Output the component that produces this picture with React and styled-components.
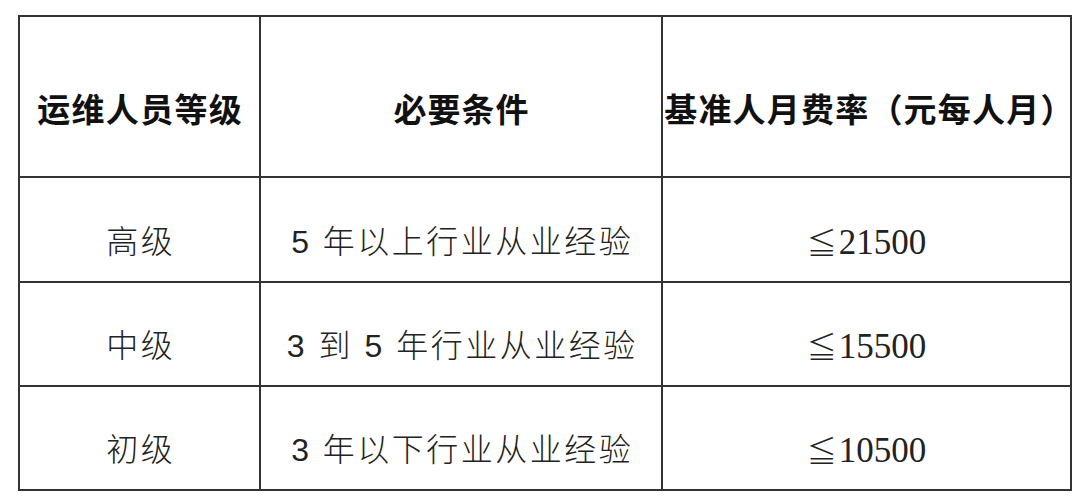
import React from "react";
import styled, { createGlobalStyle } from "styled-components";

const Global = createGlobalStyle`
  html, body { margin: 0; padding: 0; background: #ffffff; }
  body { font-family: "Noto Sans CJK SC", sans-serif; }
`;

const Page = styled.div`
  padding: 15px 0 0 18px;
  width: 1080px;
  height: 500px;
  box-sizing: border-box;
  background: #fff;
`;

const Table = styled.table`
  border-collapse: collapse;
  table-layout: fixed;
  width: 1052px;
`;

const Row = styled.tr`
  height: ${(p) => p.$h}px;
`;

const HeadCell = styled.th`
  border: 2px solid #333;
  padding: 22px 0 0 ${(p) => p.$ls ?? 1}px;
  text-align: center;
  vertical-align: middle;
  font-family: "Noto Sans CJK SC", sans-serif;
  font-weight: 700;
  font-size: 33px;
  line-height: 40px;
  letter-spacing: ${(p) => p.$ls ?? 1}px;
  white-space: nowrap;
  color: #111;
`;

const Cell = styled.td`
  border: 2px solid #333;
  padding: 24px 0 0 ${(p) => p.$ls ?? 2.5}px;
  text-align: center;
  vertical-align: middle;
  font-family: ${(p) =>
    p.$serif
      ? `"Liberation Serif", "Noto Sans CJK SC", serif`
      : `"Liberation Sans", "Noto Sans CJK SC", sans-serif`};
  font-weight: 300;
  font-size: ${(p) => (p.$serif ? 35 : 32)}px;
  line-height: 40px;
  letter-spacing: ${(p) => p.$ls ?? 2.5}px;
  white-space: nowrap;
  color: #222;
`;

const Leq = styled.span`
  font-family: "Noto Sans CJK SC", sans-serif;
  font-size: 30px;
  letter-spacing: 0;
  margin-right: 2px;
`;

const rows = [
  { level: "高级", cond: "5 年以上行业从业经验", rate: "21500", h: 105 },
  { level: "中级", cond: "3 到 5 年行业从业经验", rate: "15500", h: 104 },
  { level: "初级", cond: "3 年以下行业从业经验", rate: "10500", h: 104 },
];

export default function App() {
  return (
    <>
      <Global />
      <Page>
        <Table>
          <colgroup>
            <col style={{ width: 241 }} />
            <col style={{ width: 402 }} />
            <col style={{ width: 409 }} />
          </colgroup>
          <thead>
            <Row $h={161}>
              <HeadCell $ls={1.3}>运维人员等级</HeadCell>
              <HeadCell $ls={1}>必要条件</HeadCell>
              <HeadCell $ls={1.2}>基准人月费率（元每人月）</HeadCell>
            </Row>
          </thead>
          <tbody>
            {rows.map((r) => (
              <Row key={r.level} $h={r.h}>
                <Cell>{r.level}</Cell>
                <Cell>{r.cond}</Cell>
                <Cell $serif $ls={0}>
                  <Leq>≦</Leq>
                  {r.rate}
                </Cell>
              </Row>
            ))}
          </tbody>
        </Table>
      </Page>
    </>
  );
}
